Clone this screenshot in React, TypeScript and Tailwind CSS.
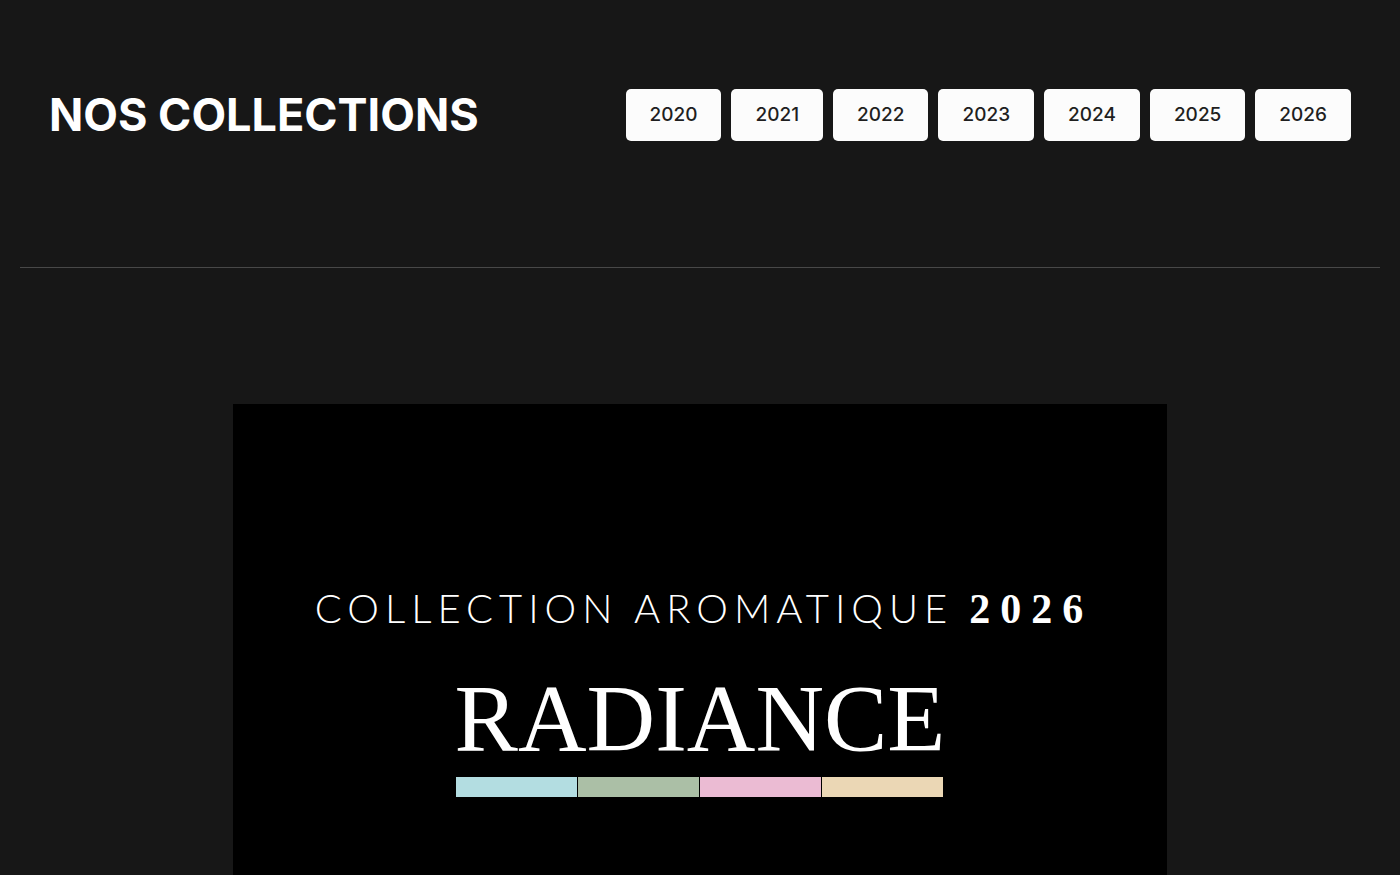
const years = ["2020", "2021", "2022", "2023", "2024", "2025", "2026"];

const swatches = ["bg-[#b3dde1]", "bg-[#abbfa6]", "bg-[#ebbbd3]", "bg-[#ebd7b5]"];

function Header() {
  return (
    <header className="mx-5 flex flex-wrap items-center justify-between gap-6 px-[29px]">
      <h1 className="text-[45px] leading-[52px] font-bold text-white">NOS COLLECTIONS</h1>
      <nav aria-label="Collections" className="flex flex-wrap gap-[10px]">
        {years.map((year) => (
          <a
            key={year}
            href={`#${year}`}
            className="rounded-[5px] bg-[#fcfcfc] px-6 py-3 text-[19px] leading-7 font-medium text-[#1f1f1f]"
          >
            {year}
          </a>
        ))}
      </nav>
    </header>
  );
}

function CollectionCover() {
  return (
    <section
      id="2026"
      className="mx-auto flex w-2/3 grow flex-col items-center bg-black pt-[180px] pb-[78px] text-white"
    >
      <p className="flex items-baseline gap-4 pl-2 leading-12 whitespace-nowrap">
        <span className="font-['Lato',sans-serif] text-[40px] font-light tracking-[6px]">
          COLLECTION AROMATIQUE
        </span>
        <span className="font-['Liberation_Serif',serif] text-[42px] font-bold tracking-[10px]">
          2026
        </span>
      </p>
      <h2 className="mt-9 font-['Liberation_Serif',serif] text-[95px] leading-[100px]">RADIANCE</h2>
      <div className="mt-2 flex h-5 w-[487px] gap-px">
        {swatches.map((color) => (
          <div key={color} className={`flex-1 ${color}`} />
        ))}
      </div>
    </section>
  );
}

export default function App() {
  return (
    <main className="flex min-h-screen flex-col bg-[#171717] pt-[89px] font-['Inter',sans-serif]">
      <Header />
      <hr className="mx-5 mt-[126px] mb-[136px] border-[#484848]" />
      <CollectionCover />
    </main>
  );
}
